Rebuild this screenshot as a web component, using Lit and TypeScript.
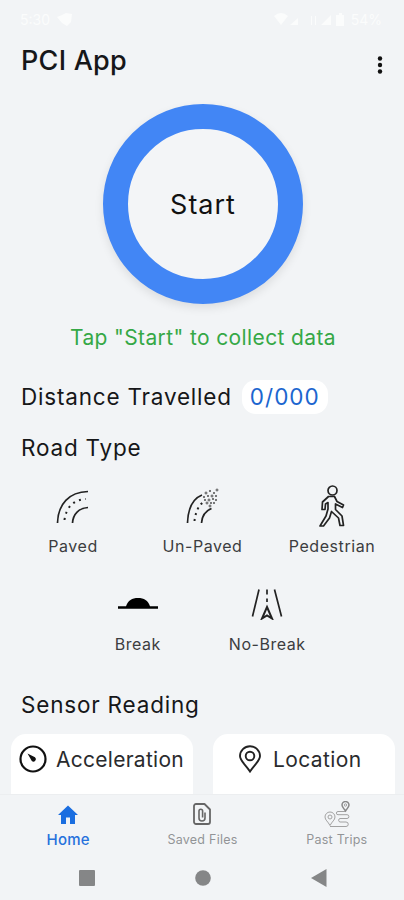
import { LitElement, html, css, svg } from "lit";
import { customElement } from "lit/decorators.js";

const paved = html`<svg width="36" height="36" viewBox="0 0 36 36" fill="none" stroke="#222" stroke-width="1.7">
  <path d="M2.5 35C3 16 14 4 33 3.5"/><path d="M17.5 35C18 26 24 20 33 19.5"/>
  <path d="M9.5 32C11 20 18 11.5 31 11" stroke-width="2" stroke-dasharray="2 4.5"/></svg>`;

const specks = [[21, 5], [25, 3], [29, 5], [32, 2], [19, 9], [23, 8], [27, 8], [31, 8], [20, 12], [24, 12], [28, 11], [31, 12], [22, 15], [26, 15], [29, 15], [25, 18]];
const unpaved = html`<svg width="36" height="36" viewBox="0 0 36 36" fill="none" stroke="#222" stroke-width="1.7">
  <path d="M2.5 35C3 21 7 11 17 7"/><path d="M16.5 35C17 28 20 23 26.5 20.5"/>
  <path d="M9.5 33C10.5 24 14 16 20 13" stroke-width="2" stroke-dasharray="2 4"/>
  ${specks.map(([x, y], i) => svg`<circle cx=${x} cy=${y} r=${i % 3 ? 0.7 : 1} stroke="#444" stroke-width="0.9"/>`)}</svg>`;

const pedestrian = html`<svg width="28" height="42" viewBox="0 0 28 42" fill="none" stroke="#222" stroke-width="1.7" stroke-linejoin="round">
  <circle cx="14.5" cy="5.5" r="4.5"/>
  <path d="M10.5 11.5H16.5L19 16.5L25.5 20L24.5 22.5L17.5 19V24.5L24 31L25.5 40.5H22L20.5 33L13.5 26.5L11.5 33L5.5 41H2L8 31L10 24V17.5L7.5 19L7 24.5H4L4.5 17Z"/>
  </svg>`;

const bump = html`<svg width="40" height="12" viewBox="0 0 40 12"><path d="M0 8.3H8C10 2.500 14 0 20 0S30 2.500 32 8.300H40V10.700H0Z" fill="#000"/></svg>`;

const lane = html`<svg width="32" height="32" viewBox="0 0 32 32" fill="none" stroke="#222" stroke-width="1.7">
  <path d="M8 1.5L1.5 28.5M23.5 1.5L30.5 28.5"/><path d="M16 1.5V14" stroke-dasharray="5 4"/>
  <path d="M16 19L21 30.5L16 27.5L11 30.5Z" stroke-width="2"/></svg>`;

const gauge = html`<svg width="28" height="28" viewBox="0 0 28 28" fill="none" stroke="#111" stroke-width="2.2">
  <circle cx="14" cy="14" r="12.5"/><path d="M8.500 8.500L16 12.300A2.200 2.200 0 0 1 12.800 16Z" fill="#111" stroke="none"/></svg>`;

const pin = html`<svg width="24" height="28" viewBox="0 0 24 28" fill="none" stroke="#222" stroke-width="1.9">
  <path d="M12 26.500C8 20 2 16 2 11A10 9.800 0 0 1 22 11C22 16 16 20 12 26.500Z"/><circle cx="12" cy="11" r="4.3"/></svg>`;

const home = html`<svg width="20" height="19" viewBox="0 0 20 19"><path d="M8 19V12.500H12V19H17V10H20L10 .500L0 10H3V19Z" fill="#1b6ee0"/></svg>`;

const files = html`<svg width="18" height="22" viewBox="0 0 18 22" fill="none" stroke="#666" stroke-width="1.8" stroke-linejoin="round">
  <path d="M3 1H11.500L17 6.500V19A2 2 0 0 1 15 21H3A2 2 0 0 1 1 19V3A2 2 0 0 1 3 1Z"/>
  <path d="M12 9.500V15A3 3 0 0 1 6 15V8A1.800 1.800 0 0 1 9.600 8V14.500" stroke-width="1.6"/></svg>`;

const trips = html`<svg width="26" height="27" viewBox="0 0 26 27" fill="none" stroke="#a2a2a2" stroke-width="1">
  <path d="M21.500 10C19.500 7 18 6 18 4A3.500 3.500 0 0 1 25 4C25 6 23.500 7 21.500 10Z" stroke="#888" stroke-width="1.5"/><circle cx="21.500" cy="4" r="1.2"/>
  <path d="M6 24.500C4 20.500 1 19 1 16A5 5 0 0 1 11 16C11 19 8 20.500 6 24.500Z"/><circle cx="6" cy="16" r="2"/>
  <path d="M21 10.500H14A1.600 1.600 0 0 0 14 13.700H23A1.700 1.700 0 0 1 23 17.500H16A1.800 1.800 0 0 0 16 21H22A2 2 0 0 1 22 25.500H6"/></svg>`;

@customElement("app-root")
export class AppRoot extends LitElement {
  static styles = css`
    :host { display: flex; flex-direction: column; height: 900px; overflow: hidden; background: #f2f4f6; color: #161719; font-family: Inter, Roboto, sans-serif; }
    svg { display: block; flex: none; }
    .status { height: 36px; box-sizing: border-box; padding: 3px 22px 0 20px; display: flex; align-items: center; justify-content: space-between; color: #fbfcfc; font-size: 14px; }
    .group { display: flex; align-items: center; gap: 7px; }
    header { height: 68px; display: flex; justify-content: space-between; padding: 0 21px; }
    h1 { margin: 8px 0 0; font-size: 27px; line-height: 33px; font-weight: 500; letter-spacing: .25px; }
    .menu { margin: 20px 0 0; height: 18px; }
    .start { flex: none; align-self: center; width: 200px; height: 200px; margin-left: 1px; box-sizing: border-box; border: 25px solid #4286f5; border-radius: 50%; background: #f3f5f7; display: flex; align-items: center; justify-content: center; font: 400 27px Inter, sans-serif; letter-spacing: 1px; color: #111; box-shadow: 0 4px 10px #00000018; padding: 1px 0 0 1px; }
    .hint { margin: 20px 0 0 2px; height: 28px; line-height: 28px; text-align: center; color: #35a846; font-size: 21px; letter-spacing: .38px; }
    h2 { margin: 0; font-size: 22.5px; line-height: 32px; font-weight: 400; letter-spacing: .8px; }
    .distance { margin: 28px 0 0 21px; display: flex; align-items: center; gap: 10px; height: 34px; }
    .value { height: 34px; line-height: 34px; width: 86px; text-align: center; border-radius: 14px; background: #fff; color: #1c66cf; font-size: 22.5px; letter-spacing: 1px; }
    .road { margin: 18px 0 0 21px; }
    .row { display: flex; justify-content: center; height: 98px; padding-left: 1px; }
    .row.first { margin-top: 17px; }
    .type { width: 129.5px; display: flex; flex-direction: column; align-items: center; color: #3c3d40; font-size: 16px; letter-spacing: .55px; }
    .icon { height: 50px; display: flex; align-items: center; }
    .type span { line-height: 24px; margin-top: 3px; }
    .sensor { margin: 12px 0 0 21px; }
    .cards { display: grid; grid-template-columns: 1fr 1fr; gap: 20px; padding: 0 9px 0 11px; margin-top: 13px; height: 60px; }
    .card { background: #fff; border-radius: 15px 15px 0 0; display: flex; align-items: center; padding: 0 0 10px 8px; box-sizing: border-box; gap: 9px; font-size: 21px; letter-spacing: .27px; color: #2a2b2d; }
    .card.location { padding-left: 25px; gap: 11px; letter-spacing: .4px; }
    .tabs { height: 64px; flex: none; display: flex; background: #f2f4f6; border-top: 1px solid #eceef0; box-sizing: border-box; padding-left: 1px; }
    .tab { flex: 1; display: flex; flex-direction: column; align-items: center; font-size: 12.5px; letter-spacing: .25px; color: #929497; }
    .tab .glyph { height: 28px; margin-top: 5px; display: flex; align-items: center; }
    .tab span { line-height: 20px; margin-top: 2px; }
    .tab.active { color: #2671dc; font-size: 15px; font-weight: 500; }
    .system { height: 40px; flex: none; display: flex; align-items: center; justify-content: center; gap: 100px; padding-left: 1px; }
  `;

  roadType(icon: unknown, label: string) {
    return html`<div class="type"><div class="icon">${icon}</div><span>${label}</span></div>`;
  }

  tab(icon: unknown, label: string, active = false) {
    return html`<div class="tab ${active ? "active" : ""}"><div class="glyph">${icon}</div><span>${label}</span></div>`;
  }

  render() {
    return html`
      <div class="status">
        <div class="group"><span>5:30</span><svg width="16" height="14" viewBox="0 0 16 14"><path d="M0 4L5 2L9 0L15 1L14 9L10 13L5 10Z" fill="currentColor"/></svg></div>
        <div class="group">
          <svg width="70" height="14" viewBox="0 0 70 14" fill="currentColor"><path d="M0 3Q7-3 14 3L7 12ZM16 12L24 5V12ZM37 3H38V12H37ZM41 3H42V12H41ZM47 12L57 2V12ZM64 2H65V0H68V2H70V13H62V2Z"/></svg>
          <span>54%</span>
        </div>
      </div>
      <header>
        <h1>PCI App</h1>
        <svg class="menu" width="6" height="18" viewBox="0 0 6 18" fill="#111"><circle cx="3" cy="2.5" r="2.2"/><circle cx="3" cy="9" r="2.2"/><circle cx="3" cy="15.5" r="2.2"/></svg>
      </header>
      <button class="start">Start</button>
      <p class="hint">Tap "Start" to collect data</p>
      <div class="distance"><h2>Distance Travelled</h2><div class="value">0/000</div></div>
      <h2 class="road">Road Type</h2>
      <div class="row first">
        ${this.roadType(paved, "Paved")}${this.roadType(unpaved, "Un-Paved")}${this.roadType(pedestrian, "Pedestrian")}
      </div>
      <div class="row">${this.roadType(bump, "Break")}${this.roadType(lane, "No-Break")}</div>
      <h2 class="sensor">Sensor Reading</h2>
      <div class="cards">
        <div class="card">${gauge}<span>Acceleration</span></div>
        <div class="card location">${pin}<span>Location</span></div>
      </div>
      <nav class="tabs">
        ${this.tab(home, "Home", true)}${this.tab(files, "Saved Files")}${this.tab(trips, "Past Trips")}
      </nav>
      <div class="system">
        <svg width="16" height="16"><rect width="16" height="16" rx="1" fill="#858687"/></svg>
        <svg width="16" height="16"><circle cx="8" cy="8" r="7.8" fill="#858687"/></svg>
        <svg width="16" height="18"><path d="M0 9L15.5 0V18Z" fill="#858687"/></svg>
      </div>`;
  }
}
